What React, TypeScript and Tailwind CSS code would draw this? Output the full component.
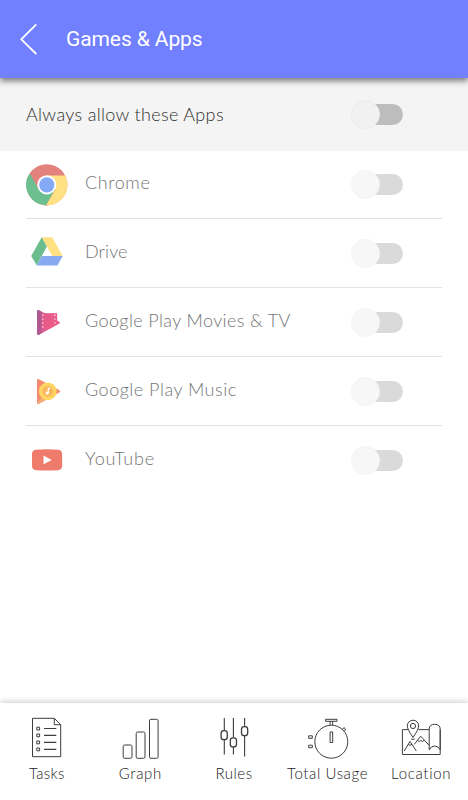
import type { ReactNode } from 'react'

const apps = [
  { name: 'Chrome', icon: ChromeIcon, tracking: 'tracking-[0.6px]' },
  { name: 'Drive', icon: DriveIcon, tracking: 'tracking-[0.1px]' },
  { name: 'Google Play Movies & TV', icon: MoviesIcon, tracking: 'tracking-[0.38px]' },
  { name: 'Google Play Music', icon: MusicIcon, tracking: 'tracking-[0.5px]' },
  { name: 'YouTube', icon: YouTubeIcon, tracking: 'tracking-[0.85px]' },
]

const tabs = [
  { label: 'Tasks', icon: TasksIcon, tracking: 'tracking-[0.35px]' },
  { label: 'Graph', icon: GraphIcon, tracking: 'tracking-[0.7px]' },
  { label: 'Rules', icon: RulesIcon, tracking: 'tracking-[0.5px]' },
  { label: 'Total Usage', icon: UsageIcon, tracking: 'tracking-[0.6px]' },
  { label: 'Location', icon: LocationIcon, tracking: 'tracking-[0.7px]' },
]

function AppSvg({ children }: { children: ReactNode }) {
  return (
    <svg className="h-[42px] w-[42px] shrink-0" viewBox="0 0 42 42">
      {children}
    </svg>
  )
}

function ChromeIcon() {
  return (
    <AppSvg>
      <circle cx="20.8" cy="20.8" r="20.6" fill="#e3817d" />
      <path d="M20.8 11.5H39.2A20.6 20.6 0 0 1 19.9 41.4L28.9 25.5Z" fill="#ffe083" />
      <path d="M3.8 9.2A20.6 20.6 0 0 0 19.9 41.4L28.9 25.5 12.4 24.8Z" fill="#6cbf8f" />
      <circle cx="20.8" cy="20.8" r="9.6" fill="#fff" />
      <circle cx="20.8" cy="20.8" r="7.6" fill="#85aaf5" />
    </AppSvg>
  )
}

function DriveIcon() {
  return (
    <AppSvg>
      <path d="M15.7 5.2H26.2L36.7 24H26.3Z" fill="#ffe083" />
      <path d="M15.7 5.2 20.9 14.5 10.7 33.2 5.2 24Z" fill="#6cbd8e" />
      <path d="M15.9 24H36.7L31.4 33.4H10.6Z" fill="#86a9f0" />
    </AppSvg>
  )
}

function MoviesIcon() {
  return (
    <AppSvg>
      <defs>
        <linearGradient id="movies" x1="0" y1="0" x2="0.8" y2="0.4">
          <stop offset="0" stopColor="#b5609a" />
          <stop offset="1" stopColor="#e8608c" />
        </linearGradient>
      </defs>
      <path d="M11 9.9Q11.2 8.5 13 9.3L19 12.3H31.2V19.7L33.6 21.1Q34.4 21.8 33.6 22.5L13 33.7Q11 34.5 11 32.5Z" fill="url(#movies)" />
      <path d="M11 9.9Q11.2 8.5 13 9.3L15.2 10.5V32.5L13 33.7Q11 34.5 11 32.5Z" fill="#a65590" opacity=".7" />
      <path d="M15.6 12.5H31V19.5L33 21.3 24.5 27.3H15.6Z" fill="#ee5a88" opacity=".7" />
      <path d="M16.8 13.5v13M28.9 13.5v9" stroke="#fbd5e0" strokeWidth="1.4" strokeDasharray="1.4 2.5" />
    </AppSvg>
  )
}

function MusicIcon() {
  return (
    <AppSvg>
      <path d="M11 9.9Q11.2 8.5 13 9.3L33.4 20.2Q34.8 21.3 33.4 22.4L13 33.7Q11 34.5 11 32.5Z" fill="#f28b72" />
      <path d="M11.3 33.3Q11.8 34.2 13 33.7L25 27.1 18 24Z" fill="#f8ad78" />
      <circle cx="21.8" cy="21.3" r="8.9" fill="#ffd662" />
      <circle cx="21.8" cy="21.3" r="5.5" fill="#f8b960" />
      <circle cx="21.2" cy="23" r="1.6" fill="#fff" />
      <path d="M22.3 23V18.3H24.3" fill="none" stroke="#fff" strokeWidth="1.2" />
    </AppSvg>
  )
}

function YouTubeIcon() {
  return (
    <AppSvg>
      <path d="M10 10.7Q21 9.9 32 10.7 36 10.9 36.1 15V27Q36 31 32 31.2 21 32 10 31.2 6.1 31 6 27V15Q6.1 10.9 10 10.7Z" fill="#ef7b6c" />
      <path d="M17.5 16.6 25.8 20.9 17.5 25.2Z" fill="#fff" />
    </AppSvg>
  )
}

function TabSvg({ children }: { children: ReactNode }) {
  return (
    <svg
      className="h-11 w-11"
      viewBox="0 0 44 44"
      fill="none"
      stroke="#3d3d3d"
      strokeWidth="1"
      strokeLinejoin="round"
    >
      {children}
    </svg>
  )
}

function TasksIcon() {
  return (
    <TabSvg>
      <path d="M7.5 3.3H29.3L35.7 9.7V41.7H7.5ZM29.3 3.3V9.7H35.7" />
      <path d="M19 13.5H31.3M19 20.4H31.3M19 27.4H31.3M19 34.4H31.3" strokeWidth="1.1" />
      <path d="M11.8 12.2H14.6V15H11.8ZM11.8 19H14.6V21.8H11.8ZM11.8 26H14.6V28.8H11.8ZM11.8 33H14.6V35.8H11.8Z" />
    </TabSvg>
  )
}

function GraphIcon() {
  return (
    <TabSvg>
      <rect x="5.2" y="30" width="8.8" height="13.3" rx="1.5" />
      <rect x="18.2" y="17" width="8.8" height="26.3" rx="1.5" />
      <rect x="31.5" y="4.3" width="8.6" height="39" rx="1.5" />
    </TabSvg>
  )
}

function RulesIcon() {
  return (
    <TabSvg>
      <path d="M12.3 3V15.5M12.3 25V39.5M21.4 3V22.5M21.4 32V39.5M32.6 3V11.5M32.6 21V41.5" strokeWidth="1.1" />
      <rect x="9.1" y="15.7" width="6.2" height="9" rx="2.7" strokeWidth="1.3" />
      <rect x="18.3" y="22.9" width="6.2" height="9" rx="2.7" strokeWidth="1.3" />
      <rect x="29.5" y="11.7" width="6.2" height="9" rx="2.7" strokeWidth="1.3" />
    </TabSvg>
  )
}

function UsageIcon() {
  return (
    <TabSvg>
      <circle cx="25.3" cy="26.7" r="16.5" />
      <path d="M19.6 4.3H31V6.3H19.6ZM24.1 6.3V10.2M26.7 6.3V10.2M36.2 14.2 38.3 12.6 39.4 14.6 38.4 16" />
      <rect x="24.1" y="17" width="2.6" height="10.5" />
      <path d="M2.7 20.8H6.3V23.3H2.7ZM2.7 30.2H6.3V32.7H2.7Z" />
    </TabSvg>
  )
}

function LocationIcon() {
  return (
    <TabSvg>
      <path d="M9 14.6H3.4V39.5H41.2V14.6M19.5 14.6H30.2" />
      <path d="M30.2 34.5V14.3Q30.2 9.3 35.7 9.3T41.2 14.3V34.8Q39.5 31 35.7 31T30.2 34.8Z" />
      <path d="M14 22.5Q8.3 14.2 8.3 10.9A5.7 5.7 0 0 1 19.7 10.9Q19.7 14.2 14 22.5Z" />
      <circle cx="14" cy="11" r="2.6" />
      <path d="M5.2 36 11 26.4 17.3 36M9.1 29.3 11 30.4 13 29.2M15.3 29.3 21.7 21.2 30 30.2M18.4 25.4 20.3 26.5 21.8 25.4 23.5 26.5 25.4 25.2M12.2 24.2H15.8" />
    </TabSvg>
  )
}

function Toggle({ muted = false }: { muted?: boolean }) {
  return (
    <button
      className={`relative flex h-[29px] w-[52px] shrink-0 items-center justify-end ${muted ? 'opacity-55' : ''}`}
    >
      <span className="h-[21px] w-[43px] rounded-full bg-[#bdbdbd]" />
      <span className="absolute left-0 h-[29px] w-[29px] rounded-full border border-[#ebebeb] bg-[#f1f1f1]" />
    </button>
  )
}

export default function App() {
  return (
    <div className="flex h-[800px] w-[468px] flex-col overflow-hidden bg-white font-['Lato',sans-serif] font-light">
      <header className="z-10 flex h-[78px] shrink-0 items-center bg-[#7080ff] pl-5 text-white shadow-[0_3px_6px_rgba(0,0,0,0.5)]">
        <svg className="h-8 w-[18px]" viewBox="0 0 18 32" fill="none" stroke="currentColor" strokeWidth="1.8">
          <path d="M16.3 1.3 1.3 16.3 16.3 31" />
        </svg>
        <h1 className="mt-0.5 ml-7 font-['Roboto',sans-serif] text-[21px] font-normal tracking-[-0.1px]">
          Games &amp; Apps
        </h1>
      </header>

      <div className="flex h-[73px] shrink-0 items-center justify-between bg-[#f4f4f4] pr-[65px] pl-[26px] text-lg">
        <span className="mb-0.5 tracking-[0.33px] text-[#303030]">Always allow these Apps</span>
        <Toggle />
      </div>

      <main className="-mt-px flex-1 px-[26px] pt-px">
        {apps.map((app) => {
          const Icon = app.icon

          return (
            <div
              key={app.name}
              className="flex h-[69px] items-center border-b border-[#e2e2e2] pr-[39px] first:h-[68px] last:border-transparent"
            >
              <Icon />
              <span className={`mb-[5px] ml-[17px] flex-1 text-lg whitespace-nowrap text-[#757575] ${app.tracking}`}>
                {app.name}
              </span>
              <Toggle muted />
            </div>
          )
        })}
      </main>

      <nav className="grid h-[97px] shrink-0 grid-cols-5 bg-white pt-3 shadow-[0_-1px_6px_rgba(0,0,0,0.22)]">
        {tabs.map((tab) => {
          const Icon = tab.icon

          return (
            <div key={tab.label} className="flex flex-col items-center">
              <Icon />
              <span className={`mt-[3px] text-[15px] leading-[22px] whitespace-nowrap text-[#222] ${tab.tracking}`}>
                {tab.label}
              </span>
            </div>
          )
        })}
      </nav>
    </div>
  )
}
